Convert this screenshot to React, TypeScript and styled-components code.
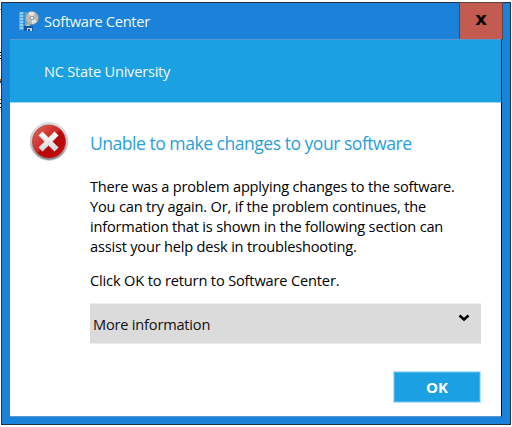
import React from "react";
import styled, { createGlobalStyle } from "styled-components";

const GlobalStyle = createGlobalStyle`
  * { box-sizing: border-box; }
  body { margin: 0; background: #fff; overflow: hidden; font-family: "Open Sans", "Noto Sans", sans-serif; }
`;

const Desktop = styled.div`
  width: 512px;
  height: 427px;
  display: flex;
  padding-top: 2px;
`;

const Backdrop = styled.div`
  width: 1px;
  display: flex;
  flex-direction: column;
`;

const Fragment = styled.i<{ $gap: number; $color: string; $size?: number }>`
  height: ${(p) => p.$size ?? 1}px;
  margin-top: ${(p) => p.$gap}px;
  background: ${(p) => p.$color};
`;

const Window = styled.section`
  width: 510px;
  height: 423px;
  border: 1px solid #24303d;
  background: #1a83d9;
  display: flex;
  flex-direction: column;
`;

const TitleBar = styled.header`
  height: 36px;
  display: flex;
  align-items: center;
  padding-left: 17px;
`;

const Title = styled.h1`
  margin: 0 auto 0 5px;
  font-size: 14.6px;
  font-weight: 400;
  line-height: 20px;
  letter-spacing: -0.27px;
  color: #f4f9fe;
`;

const CloseButton = styled.button`
  width: 44px;
  height: 38px;
  align-self: flex-start;
  margin: -1px 7px 0 0;
  padding: 0 0 4px;
  border: 1px solid #62404b;
  background: #c35b50;
  font: 700 18px/30px "DejaVu Sans", sans-serif;
  color: #000;
`;

const Client = styled.main`
  width: 492px;
  height: 378px;
  margin-left: 8px;
  border-top: 1px solid #5796cf;
  border-right: 1px solid #061522;
  border-bottom: 1px solid #5796cf;
  background: #fff;
`;

const Banner = styled.div`
  height: 63px;
  padding: 20px 0 0 34px;
  background: #1ba0e2;
  border-bottom: 1px solid #9bd6f3;
  color: #f4fbff;
  font-size: 14.6px;
  line-height: 22px;
  letter-spacing: -0.22px;
`;

const Content = styled.div`
  display: grid;
  grid-template-columns: 60px 391px;
  padding: 19px 0 0 20px;
`;

const Details = styled.div`
  display: flex;
  flex-direction: column;
`;

const Heading = styled.h2`
  margin: 9px 0 21px;
  font-size: 17.6px;
  font-weight: 400;
  line-height: 24px;
  letter-spacing: -0.51px;
  color: #2aa0da;
  white-space: nowrap;
`;

const Paragraph = styled.p`
  margin: 0 0 14px;
  color: #000;
  font-size: 14.6px;
  line-height: 20px;
`;

const Line = styled.span<{ $track: number }>`
  display: block;
  width: max-content;
  letter-spacing: ${(p) => p.$track}px;
  white-space: nowrap;
`;

const Expander = styled.button`
  height: 41px;
  margin-top: -1px;
  padding: 0 11px 0 3px;
  border: 0;
  border-top: 1px solid #eee;
  border-bottom: 1px solid #eee;
  background: #dbdbdb;
  display: flex;
  align-items: center;
  justify-content: space-between;
  font: 400 14.6px/20px "Open Sans", sans-serif;
  letter-spacing: -0.2px;
  color: #111;
`;

const Chevron = styled.svg`
  margin-bottom: 12px;
`;

const OkButton = styled.button`
  width: 88px;
  height: 32px;
  margin-top: 27px;
  align-self: flex-end;
  padding: 0;
  border: 1px solid #b9e1f6;
  box-shadow: inset 0 0 0 1px #48b3e8;
  background: #1ba0e2;
  color: #fff;
  font: 700 15px/20px "Open Sans", sans-serif;
`;

const SoftwareIcon = () => (
  <svg width="20" height="21" viewBox="0 0 20 21">
    <path d="M0 1h8v18H0z" fill="#4ba9e8" />
    <path d="M1 2h4M1 5h4M1 8h4M1 11h4M1 14h4M1 17h4" stroke="#a5d8f5" strokeWidth="1.5" />
    <path d="M5 1v18" stroke="#2276b9" />
    <path d="M8 11h3v5H7z" fill="#c5b98d" />
    <circle cx="13" cy="7" r="6.500" fill="#b9bbb7" stroke="#858f96" strokeWidth=".7" />
    <path d="M13 7 9 2q4-2.500 7 0zM13 7l5 3q-2 3-5 3z" fill="#e5e6e1" />
    <circle cx="13" cy="7" r="1.800" fill="#f5f5f5" stroke="#8c8f90" />
    <path d="M5 15h9v5H6l-1-1z" fill="#1356aa" />
    <path d="M8 17h5v3H8z" fill="#c2dcef" />
    <path d="M9 18h2v2H9z" fill="#174a92" />
  </svg>
);

const ErrorIcon = () => (
  <svg width="40" height="40" viewBox="0 0 40 40">
    <defs>
      <linearGradient id="rim" x1="0" y1="0" x2="0" y2="1">
        <stop stopColor="#e5e5e5" /><stop offset=".55" stopColor="#c5c6c6" /><stop offset="1" stopColor="#8b9092" />
      </linearGradient>
      <linearGradient id="red" x1="0" y1="0" x2="1" y2="1">
        <stop stopColor="#e0685f" /><stop offset=".48" stopColor="#cf2723" /><stop offset=".52" stopColor="#b80709" /><stop offset="1" stopColor="#bf0e10" />
      </linearGradient>
      <linearGradient id="cross" x1="0" y1="0" x2="0" y2="1">
        <stop stopColor="#fff" /><stop offset="1" stopColor="#d4d6d6" />
      </linearGradient>
    </defs>
    <circle cx="19" cy="19.500" r="18.800" fill="url(#rim)" stroke="#b9bcbc" strokeWidth=".6" />
    <circle cx="19" cy="19.500" r="16.500" fill="url(#red)" stroke="#a92d2b" strokeWidth=".7" />
    <path d="m12.500 9.500 6 6 6-6 4 4-6 6 6 6-4 4-6-6-6 6-4-4 6-6-6-6z" fill="url(#cross)" stroke="#d78480" strokeWidth=".5" />
  </svg>
);

export default function App() {
  return (
    <>
      <GlobalStyle />
      <Desktop>
        <Backdrop>
          <Fragment $gap={7} $color="#8c8c8c" />
          <Fragment $gap={42} $color="#111" />
          <Fragment $gap={2} $color="#234b70" />
          <Fragment $gap={2} $color="#111" />
          <Fragment $gap={20} $color="#c5631b" $size={2} />
          <Fragment $gap={0} $color="#17457c" $size={2} />
          <Fragment $gap={16} $color="#b66225" />
          <Fragment $gap={3} $color="#111" />
          <Fragment $gap={3} $color="#111" />
        </Backdrop>
        <Window>
          <TitleBar>
            <SoftwareIcon />
            <Title>Software Center</Title>
            <CloseButton aria-label="Close">x</CloseButton>
          </TitleBar>
          <Client>
            <Banner>NC State University</Banner>
            <Content>
              <ErrorIcon />
              <Details>
                <Heading>Unable to make changes to your software</Heading>
                <Paragraph>
                  <Line $track={-0.2}>There was a problem applying changes to the software.</Line>
                  <Line $track={-0.19}>You can try again. Or, if the problem continues, the</Line>
                  <Line $track={-0.19}>information that is shown in the following section can</Line>
                  <Line $track={-0.2}>assist your help desk in troubleshooting.</Line>
                </Paragraph>
                <Paragraph><Line $track={-0.16}>Click OK to return to Software Center.</Line></Paragraph>
                <Expander>
                  More information
                  <Chevron width="12" height="8" viewBox="0 0 12 8">
                    <path d="m1.500 1.500 4.500 4 4.500-4" fill="none" stroke="#000" strokeWidth="2.600" />
                  </Chevron>
                </Expander>
                <OkButton>OK</OkButton>
              </Details>
            </Content>
          </Client>
        </Window>
      </Desktop>
    </>
  );
}
